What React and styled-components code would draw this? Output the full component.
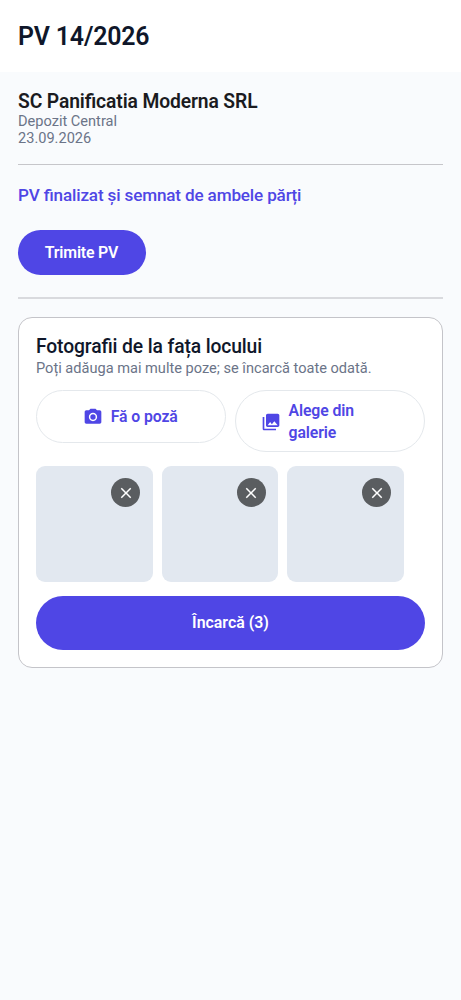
import React from "react";
import styled, { createGlobalStyle } from "styled-components";
import { MdCameraAlt, MdPhotoLibrary, MdClose } from "react-icons/md";

const GlobalStyle = createGlobalStyle`
  * {
    box-sizing: border-box;
  }
  body {
    margin: 0;
    background: #f9fbfd;
    font-family: Roboto, sans-serif;
    font-feature-settings: "liga" 1;
    color: #1b1b1f;
  }
`;

const Header = styled.header`
  height: 72px;
  padding: 1px 18px 0;
  display: flex;
  align-items: center;
  background: #fff;
`;

const Title = styled.h1`
  margin: 0;
  font-size: 24.9px;
  font-weight: 600;
  letter-spacing: -0.17px;
  color: #0f172a;
`;

const Content = styled.main`
  padding: 18px;
`;

const Heading = styled.h2`
  margin: 0;
  font-size: 19.3px;
  line-height: 22px;
  font-weight: ${(p) => p.$weight || 600};
  letter-spacing: -0.12px;
  color: ${(p) => p.$color || "#1b1b1f"};
`;

const Meta = styled.p`
  margin: 0;
  font-size: 14.58px;
  line-height: 17px;
  color: #6b7488;
`;

const Company = styled.div`
  display: grid;
  padding-top: 1px;
`;

const Divider = styled.hr`
  margin: ${(p) => (p.$thick ? "22px 0 18px" : "17px 0 18px")};
  border: 0;
  height: ${(p) => (p.$thick ? "2px" : "1px")};
  background: ${(p) => (p.$thick ? "#d9dade" : "#c6c6ca")};
`;

const Status = styled.p`
  margin: 0 0 22px;
  font-size: 17.1px;
  line-height: 25px;
  font-weight: 500;
  letter-spacing: -0.15px;
  color: #4f46e5;
`;

const PrimaryBtn = styled.button`
  display: block;
  width: ${(p) => (p.$full ? "100%" : "128px")};
  height: ${(p) => (p.$full ? "54px" : "45px")};
  padding: ${(p) => (p.$full ? "0 0 1px" : "0 1px 0 0")};
  border: 0;
  border-radius: 27px;
  background: #4f46e5;
  color: #fff;
  font: 600 15.9px Roboto, sans-serif;
  letter-spacing: ${(p) => (p.$full ? "0" : "-0.2px")};
`;

const Card = styled.section`
  padding: 17px;
  border: 1px solid #c4c4c9;
  border-radius: 14px;
  background: #fff;
`;

const CardText = styled.div`
  display: grid;
  gap: 2px;
  padding-top: 1px;
`;

const Actions = styled.div`
  display: grid;
  grid-template-columns: 1fr 1fr;
  gap: 9px;
  align-items: start;
  margin: 13px 0 14px;
`;

const OutlineBtn = styled.button`
  display: flex;
  align-items: center;
  justify-content: center;
  gap: 7.5px;
  min-height: 53px;
  padding: 8.5px 26px 6.5px 25px;
  border: 1px solid #e4e8ec;
  border-radius: 32px;
  background: #fff;
  color: #4f46e5;
  font: 600 15.8px/22.5px Roboto, sans-serif;
  letter-spacing: -0.1px;
  text-align: left;

  svg {
    flex: none;
    margin-top: -1px;
  }
`;

const Photos = styled.div`
  display: flex;
  gap: 9px;
  margin-bottom: 14px;
`;

const Photo = styled.div`
  width: 116.5px;
  height: 116px;
  padding: 12px 12.5px;
  display: flex;
  justify-content: flex-end;
  align-items: flex-start;
  border-radius: 9px;
  background: #e2e8f0;
`;

const RemoveBtn = styled.button`
  display: flex;
  align-items: center;
  justify-content: center;
  width: 29px;
  height: 29px;
  padding: 0;
  border: 0;
  border-radius: 50%;
  background: #5a5d60;
  color: #fff;
`;

const photos = [1, 2, 3];

const App = () => {
  return (
    <>
      <GlobalStyle />
      <Header>
        <Title>PV 14/2026</Title>
      </Header>
      <Content>
        <Company>
          <Heading>SC Panificatia Moderna SRL</Heading>
          <Meta>Depozit Central</Meta>
          <Meta>23.09.2026</Meta>
        </Company>
        <Divider />
        <Status>PV finalizat și semnat de ambele părți</Status>
        <PrimaryBtn type="button">Trimite PV</PrimaryBtn>
        <Divider $thick />
        <Card>
          <CardText>
            <Heading $color="#0f172a" $weight={500}>
              Fotografii de la fața locului
            </Heading>
            <Meta>Poți adăuga mai multe poze; se încarcă toate odată.</Meta>
          </CardText>
          <Actions>
            <OutlineBtn type="button">
              <MdCameraAlt size={20} />
              <span>Fă o poză</span>
            </OutlineBtn>
            <OutlineBtn type="button">
              <MdPhotoLibrary size={20} />
              <span>Alege din galerie</span>
            </OutlineBtn>
          </Actions>
          <Photos>
            {photos.map((id) => (
              <Photo key={id}>
                <RemoveBtn type="button" aria-label="Șterge">
                  <MdClose size={18} />
                </RemoveBtn>
              </Photo>
            ))}
          </Photos>
          <PrimaryBtn type="button" $full>
            Încarcă (3)
          </PrimaryBtn>
        </Card>
      </Content>
    </>
  );
};

export default App;
